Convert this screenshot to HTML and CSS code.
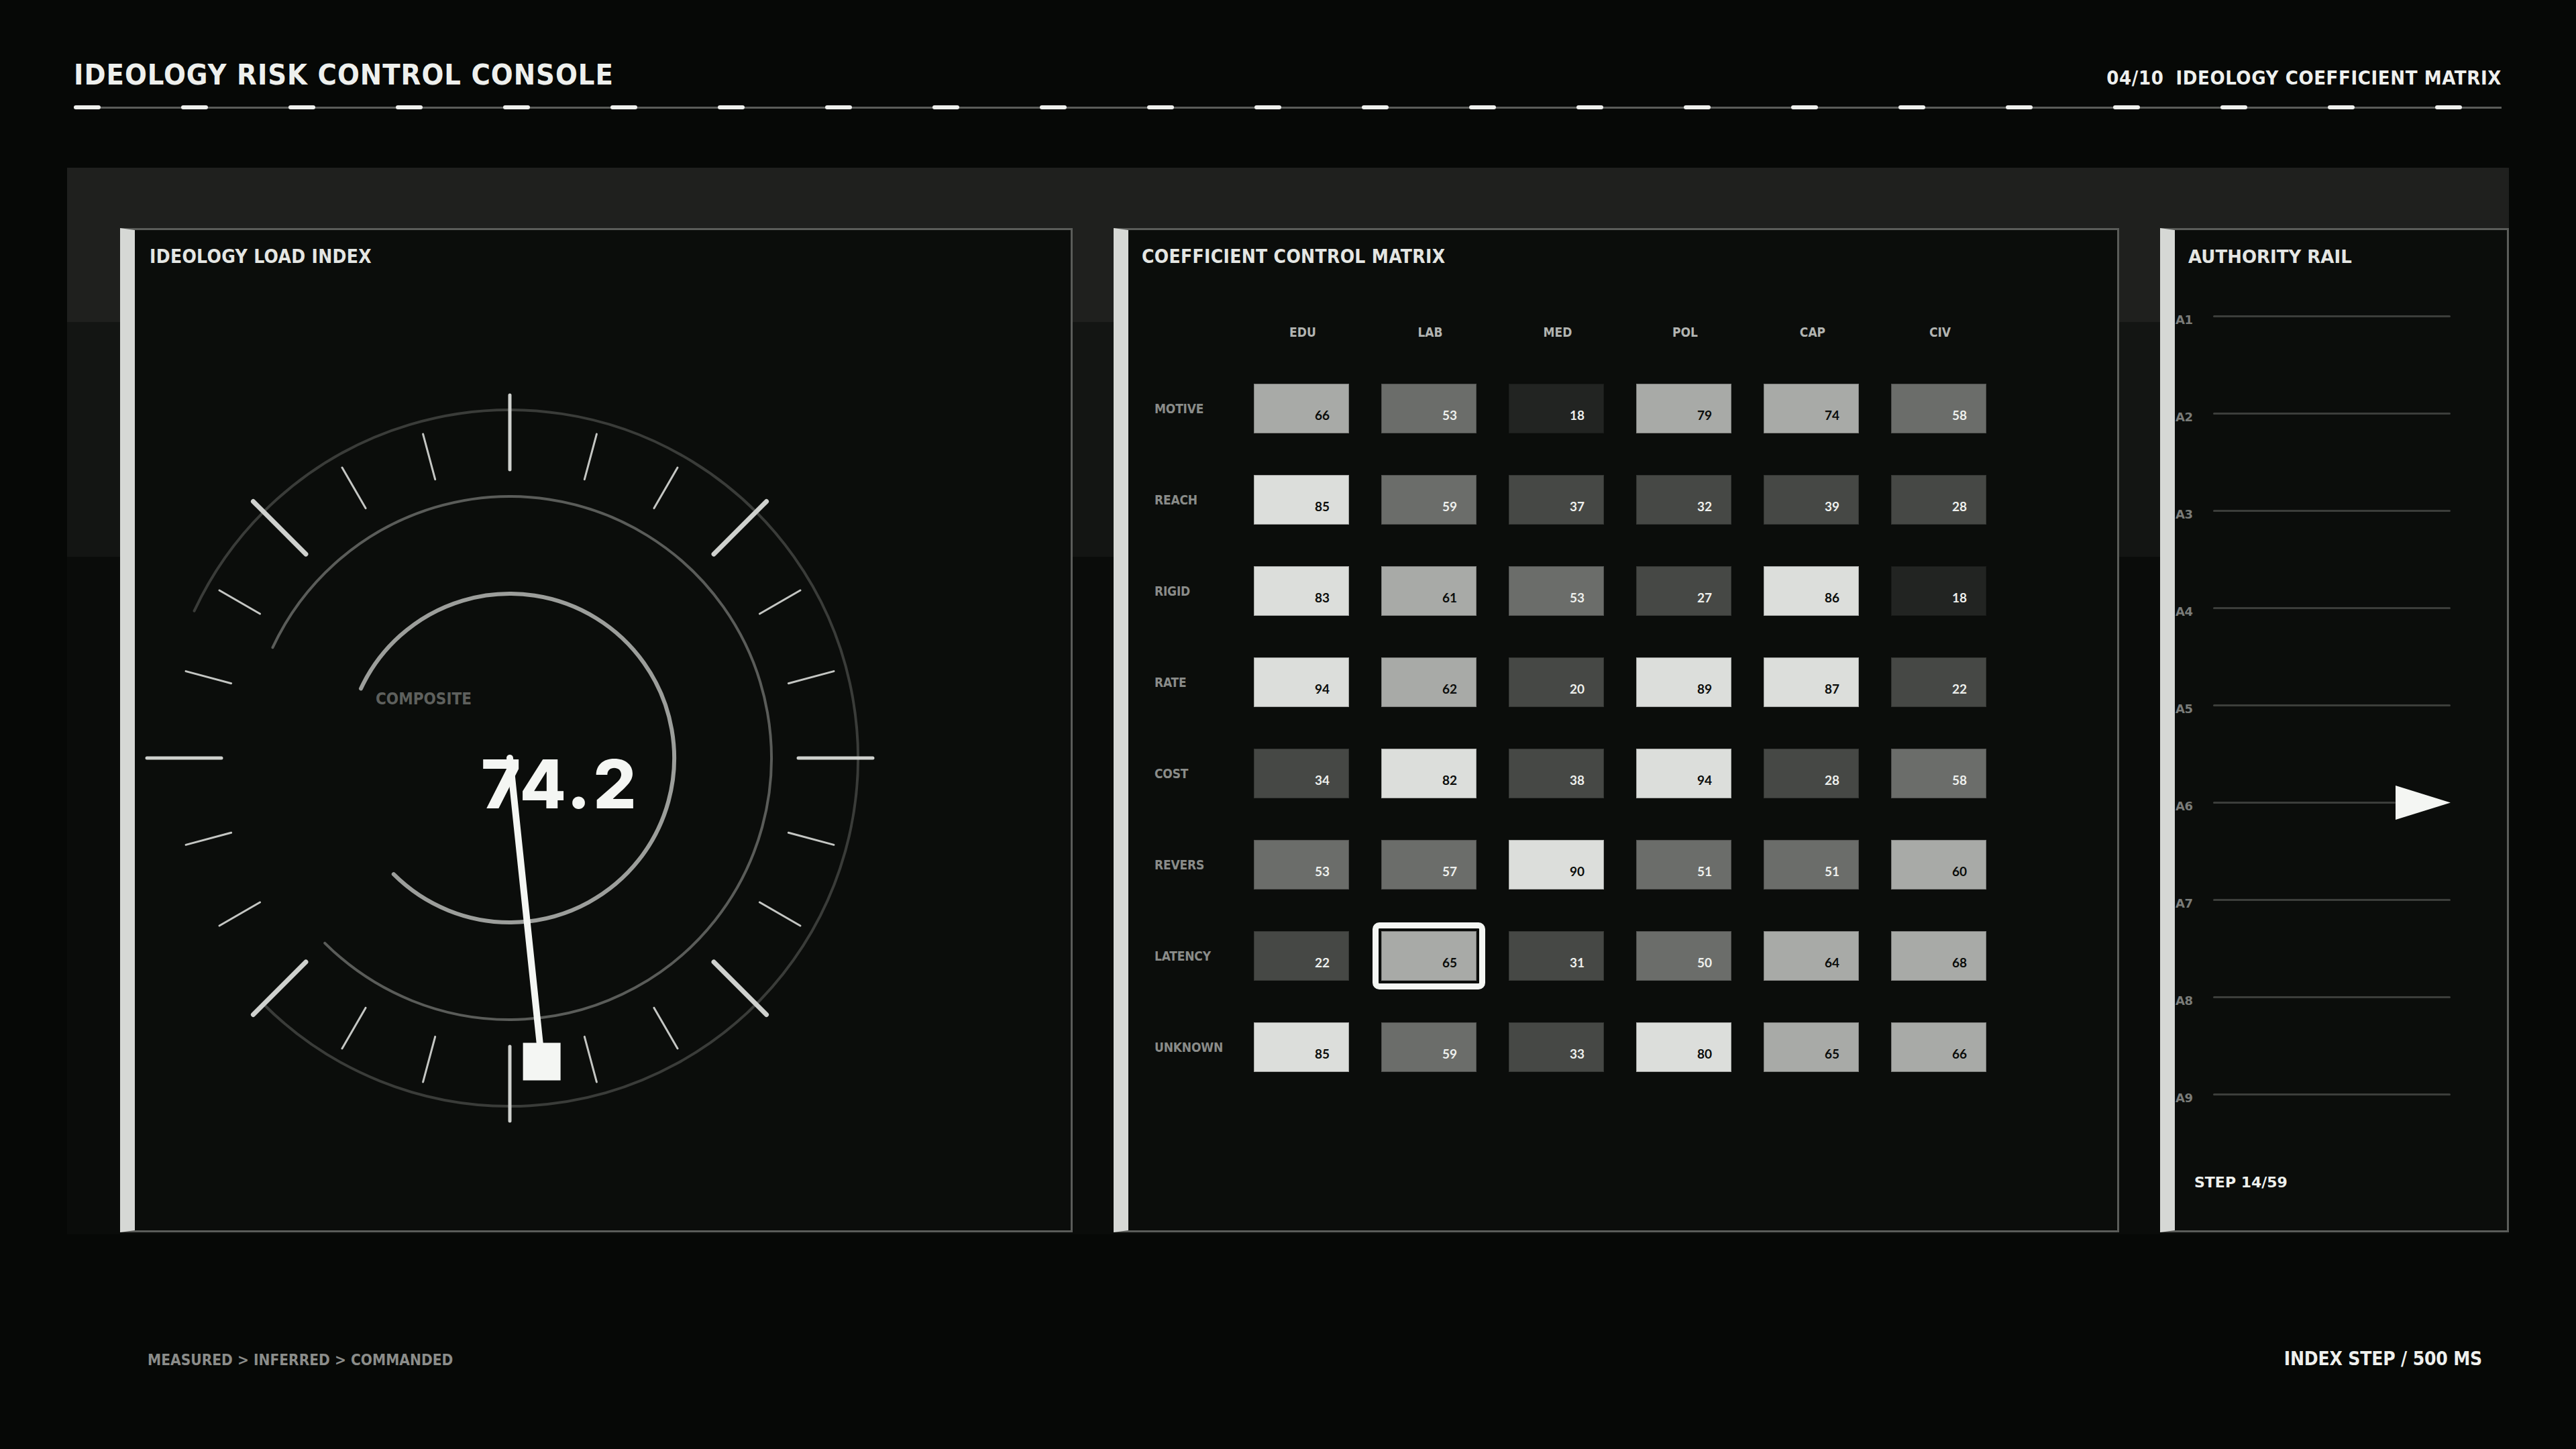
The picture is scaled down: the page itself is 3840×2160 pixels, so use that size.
FILE: index.html
```html
<!DOCTYPE html>
<html lang="en">
<head>
    <meta charset="UTF-8">
    <title>Ideology Risk Control Console</title>
    <link rel="stylesheet" href="styles.css">
</head>
<body>
    <header class="topbar">
        <div class="topbar-row">
            <h1>IDEOLOGY RISK CONTROL CONSOLE</h1>
            <div class="slide-tag"><span class="slide-no">04/10</span>IDEOLOGY COEFFICIENT MATRIX</div>
        </div>
        <div class="rule">
            <i></i><i></i><i></i><i></i><i></i><i></i><i></i><i></i><i></i><i></i><i></i><i></i>
            <i></i><i></i><i></i><i></i><i></i><i></i><i></i><i></i><i></i><i></i><i></i>
        </div>
    </header>

    <main class="band">
        <section class="panel gauge-panel">
            <h2 class="panel-title">IDEOLOGY LOAD INDEX</h2>
            <svg class="gauge" width="1395" height="1435" viewBox="0 0 1395 1435">
                <path class="ring-outer" d="M 88.6 511.7 A 519 519 0 1 1 192 1098"/>
                <path class="ring-mid" d="M 205.5 566.2 A 390 390 0 1 1 283.2 1006.8"/>
                <path class="ring-inner" d="M 337 627.5 A 245 245 0 1 1 385.8 904.2"/>

                <g class="tick-card">
                    <line x1="559" y1="190" x2="559" y2="301"/>
                    <line x1="559" y1="190" x2="559" y2="301" transform="rotate(90 559 731)"/>
                    <line x1="559" y1="190" x2="559" y2="301" transform="rotate(180 559 731)"/>
                    <line x1="559" y1="190" x2="559" y2="301" transform="rotate(270 559 731)"/>
                </g>
                <g class="tick-diag">
                    <line x1="559" y1="190" x2="559" y2="301" transform="rotate(45 559 731)"/>
                    <line x1="559" y1="190" x2="559" y2="301" transform="rotate(135 559 731)"/>
                    <line x1="559" y1="190" x2="559" y2="301" transform="rotate(225 559 731)"/>
                    <line x1="559" y1="190" x2="559" y2="301" transform="rotate(315 559 731)"/>
                </g>
                <g class="tick-minor">
                    <line x1="559" y1="231" x2="559" y2="301" transform="rotate(15 559 731)"/>
                    <line x1="559" y1="231" x2="559" y2="301" transform="rotate(30 559 731)"/>
                    <line x1="559" y1="231" x2="559" y2="301" transform="rotate(60 559 731)"/>
                    <line x1="559" y1="231" x2="559" y2="301" transform="rotate(75 559 731)"/>
                    <line x1="559" y1="231" x2="559" y2="301" transform="rotate(105 559 731)"/>
                    <line x1="559" y1="231" x2="559" y2="301" transform="rotate(120 559 731)"/>
                    <line x1="559" y1="231" x2="559" y2="301" transform="rotate(150 559 731)"/>
                    <line x1="559" y1="231" x2="559" y2="301" transform="rotate(165 559 731)"/>
                    <line x1="559" y1="231" x2="559" y2="301" transform="rotate(195 559 731)"/>
                    <line x1="559" y1="231" x2="559" y2="301" transform="rotate(210 559 731)"/>
                    <line x1="559" y1="231" x2="559" y2="301" transform="rotate(240 559 731)"/>
                    <line x1="559" y1="231" x2="559" y2="301" transform="rotate(255 559 731)"/>
                    <line x1="559" y1="231" x2="559" y2="301" transform="rotate(285 559 731)"/>
                    <line x1="559" y1="231" x2="559" y2="301" transform="rotate(300 559 731)"/>
                    <line x1="559" y1="231" x2="559" y2="301" transform="rotate(330 559 731)"/>
                    <line x1="559" y1="231" x2="559" y2="301" transform="rotate(345 559 731)"/>
                </g>

                <text class="gauge-label" x="359" y="651">COMPOSITE</text>
                <text class="gauge-value" x="516" y="806">74.2</text>

                <line class="needle" x1="559" y1="731" x2="606.6" y2="1183.5"/>
                <rect class="needle-head" x="578.6" y="1155.5" width="56" height="56"/>
            </svg>
        </section>

        <section class="panel matrix-panel">
            <h2 class="panel-title">COEFFICIENT CONTROL MATRIX</h2>
            <div class="matrix">
                <div></div>
                <div class="col-head">EDU</div>
                <div class="col-head">LAB</div>
                <div class="col-head">MED</div>
                <div class="col-head">POL</div>
                <div class="col-head">CAP</div>
                <div class="col-head">CIV</div>

                <div class="row-head">MOTIVE</div>
                <div class="cell lv3">66</div>
                <div class="cell lv2">53</div>
                <div class="cell lv0">18</div>
                <div class="cell lv3">79</div>
                <div class="cell lv3">74</div>
                <div class="cell lv2">58</div>

                <div class="row-head">REACH</div>
                <div class="cell lv4">85</div>
                <div class="cell lv2">59</div>
                <div class="cell lv1">37</div>
                <div class="cell lv1">32</div>
                <div class="cell lv1">39</div>
                <div class="cell lv1">28</div>

                <div class="row-head">RIGID</div>
                <div class="cell lv4">83</div>
                <div class="cell lv3">61</div>
                <div class="cell lv2">53</div>
                <div class="cell lv1">27</div>
                <div class="cell lv4">86</div>
                <div class="cell lv0">18</div>

                <div class="row-head">RATE</div>
                <div class="cell lv4">94</div>
                <div class="cell lv3">62</div>
                <div class="cell lv1">20</div>
                <div class="cell lv4">89</div>
                <div class="cell lv4">87</div>
                <div class="cell lv1">22</div>

                <div class="row-head">COST</div>
                <div class="cell lv1">34</div>
                <div class="cell lv4">82</div>
                <div class="cell lv1">38</div>
                <div class="cell lv4">94</div>
                <div class="cell lv1">28</div>
                <div class="cell lv2">58</div>

                <div class="row-head">REVERS</div>
                <div class="cell lv2">53</div>
                <div class="cell lv2">57</div>
                <div class="cell lv4">90</div>
                <div class="cell lv2">51</div>
                <div class="cell lv2">51</div>
                <div class="cell lv3">60</div>

                <div class="row-head">LATENCY</div>
                <div class="cell lv1">22</div>
                <div class="cell lv3 selected">65</div>
                <div class="cell lv1">31</div>
                <div class="cell lv2">50</div>
                <div class="cell lv3">64</div>
                <div class="cell lv3">68</div>

                <div class="row-head">UNKNOWN</div>
                <div class="cell lv4">85</div>
                <div class="cell lv2">59</div>
                <div class="cell lv1">33</div>
                <div class="cell lv4">80</div>
                <div class="cell lv3">65</div>
                <div class="cell lv3">66</div>
            </div>
        </section>

        <section class="panel rail-panel">
            <h2 class="panel-title">AUTHORITY RAIL</h2>
            <ul class="rail">
                <li><span class="rail-id">A1</span><span class="rail-track"></span></li>
                <li><span class="rail-id">A2</span><span class="rail-track"></span></li>
                <li><span class="rail-id">A3</span><span class="rail-track"></span></li>
                <li><span class="rail-id">A4</span><span class="rail-track"></span></li>
                <li><span class="rail-id">A5</span><span class="rail-track"></span></li>
                <li class="active">
                    <span class="rail-id">A6</span>
                    <span class="rail-track"></span>
                    <svg class="rail-marker" width="82" height="51" viewBox="0 0 82 51"><polygon points="0,0 82,25.5 0,51"/></svg>
                </li>
                <li><span class="rail-id">A7</span><span class="rail-track"></span></li>
                <li><span class="rail-id">A8</span><span class="rail-track"></span></li>
                <li><span class="rail-id">A9</span><span class="rail-track"></span></li>
            </ul>
            <div class="rail-step">STEP 14/59</div>
        </section>
    </main>

    <footer class="footer">
        <div class="chain">MEASURED &gt; INFERRED &gt; COMMANDED</div>
        <div class="cadence">INDEX STEP / 500 MS</div>
    </footer>
</body>
</html>
```

FILE: styles.css
```css
body {
    margin: 0;
    width: 3840px;
    height: 2160px;
    background-color: #060806;
    color: #eef0ed;
    font-family: "DejaVu Sans Condensed", "Liberation Sans Narrow", "DejaVu Sans", sans-serif;
    font-weight: bold;
    overflow: hidden;
}

/* header */
.topbar {
    padding: 90px 111px 0 110px;
}

.topbar-row {
    display: flex;
    justify-content: space-between;
    align-items: baseline;
}

.topbar h1 {
    margin: 0;
    font-size: 43px;
    line-height: 43px;
    letter-spacing: 1px;
    color: #eef0ed;
}

.slide-tag {
    font-size: 29px;
    line-height: 29px;
    letter-spacing: 0.6px;
    color: #eef0ed;
}

.slide-no {
    margin-right: 18px;
}

.rule {
    display: flex;
    gap: 120px;
    height: 6px;
    margin-top: 24px;
    background: linear-gradient(#5a5c59, #5a5c59) center / 100% 3px no-repeat;
}

.rule i {
    width: 40px;
    height: 6px;
    border-radius: 3px;
    background-color: #eef0ed;
}

/* main band */
.band {
    display: flex;
    gap: 61px;
    box-sizing: border-box;
    width: 3640px;
    height: 1590px;
    margin: 87px 0 0 100px;
    padding: 90px 0 0 79px;
    background: linear-gradient(to bottom, #1f201e 0, #1f201e 230px, #131513 230px, #131513 580px, #0a0c0a 580px);
}

.panel {
    box-sizing: border-box;
    height: 1497px;
    display: flex;
    flex-direction: column;
    background-color: #0b0d0b;
    border: 3px solid #5a5c59;
    border-left: 22px solid #d6d8d5;
}

.gauge-panel { width: 1420px; }
.matrix-panel { width: 1499px; }
.rail-panel { width: 520px; }

.panel-title {
    margin: 0;
    padding: 24px 0 0 20px;
    font-size: 28px;
    line-height: 32px;
    letter-spacing: 0.3px;
    color: #e4e6e3;
}

.gauge-panel .panel-title {
    padding-left: 22px;
}

/* gauge */
.gauge {
    display: block;
}

.ring-outer, .ring-mid, .ring-inner {
    fill: none;
    stroke-linecap: round;
}

.ring-outer { stroke: #3a3c39; stroke-width: 4; }
.ring-mid { stroke: #5a5c59; stroke-width: 4; }
.ring-inner { stroke: #9c9e9b; stroke-width: 6; }

.tick-card line { stroke: #cfd1ce; stroke-width: 5; stroke-linecap: round; }
.tick-diag line { stroke: #cfd1ce; stroke-width: 7; stroke-linecap: round; }
.tick-minor line { stroke: #c4c6c3; stroke-width: 3; stroke-linecap: round; }

.gauge-label {
    font-family: "DejaVu Sans Condensed", "Liberation Sans Narrow", sans-serif;
    font-weight: bold;
    font-size: 24px;
    fill: #5e605d;
}

.gauge-value {
    font-family: Inter, "Noto Sans", sans-serif;
    font-weight: 800;
    font-size: 101px;
    letter-spacing: 4px;
    fill: #f4f6f3;
}

.needle {
    stroke: #f4f6f3;
    stroke-width: 10;
    stroke-linecap: round;
}

.needle-head {
    fill: #f4f6f3;
}

/* matrix */
.matrix {
    display: grid;
    grid-template-columns: 100px repeat(6, 142px);
    grid-template-rows: 30px repeat(8, 74px);
    column-gap: 48px;
    row-gap: 62px;
    margin: 81px 0 0 39px;
}

.matrix .col-head {
    text-align: center;
    font-size: 19px;
    line-height: 30px;
    color: #b2b4b1;
    padding-left: 4px;
}

.matrix .row-head {
    display: flex;
    align-items: center;
    font-size: 19px;
    letter-spacing: -0.2px;
    color: #8a8c89;
}

.cell {
    position: relative;
    display: flex;
    align-items: flex-end;
    justify-content: flex-end;
    box-sizing: border-box;
    padding: 0 28px 17px 0;
    font-family: Lato, "Noto Sans", sans-serif;
    font-weight: bold;
    font-size: 19px;
    line-height: 19px;
    border: 1px solid rgba(0, 0, 0, 0.25);
}

.lv0 { background-color: #222422; color: #eef0ed; }
.lv1 { background-color: #464845; color: #eef0ed; }
.lv2 { background-color: #6b6d6a; color: #eef0ed; }
.lv3 { background-color: #a8aaa7; color: #0b0d0b; }
.lv4 { background-color: #dcdedb; color: #0b0d0b; }

.cell.selected::after {
    content: "";
    position: absolute;
    top: -14px;
    left: -14px;
    right: -14px;
    bottom: -14px;
    border: 9px solid #f4f6f3;
    border-radius: 10px;
}

/* authority rail */
.rail {
    list-style: none;
    margin: 0;
    padding: 0 0 0 1px;
}

.rail li {
    display: flex;
    align-items: center;
    height: 145px;
    width: 410px;
}

.rail-id {
    width: 56px;
    margin-top: 10px;
    font-family: "DejaVu Sans", sans-serif;
    font-size: 18px;
    letter-spacing: -0.5px;
    color: #7a7c79;
}

.rail-track {
    flex: 1;
    height: 3px;
    border-radius: 2px;
    background-color: #3c3e3b;
}

.rail-marker {
    display: block;
    fill: #f4f6f3;
}

.rail-panel .panel-title {
    font-family: "DejaVu Sans", sans-serif;
    font-size: 26px;
    letter-spacing: 0;
}

.rail-step {
    margin: 47px 0 0 29px;
    font-family: "DejaVu Sans", sans-serif;
    font-size: 22px;
    line-height: 24px;
    color: #eef0ed;
}

/* footer */
.footer {
    display: flex;
    justify-content: space-between;
    align-items: baseline;
    margin-top: 171px;
    padding: 0 140px 0 220px;
}

.chain {
    font-size: 22.5px;
    line-height: 22.5px;
    color: #8b8d8a;
}

.cadence {
    font-size: 28px;
    line-height: 29px;
    letter-spacing: -0.2px;
    color: #eef0ed;
}
```
